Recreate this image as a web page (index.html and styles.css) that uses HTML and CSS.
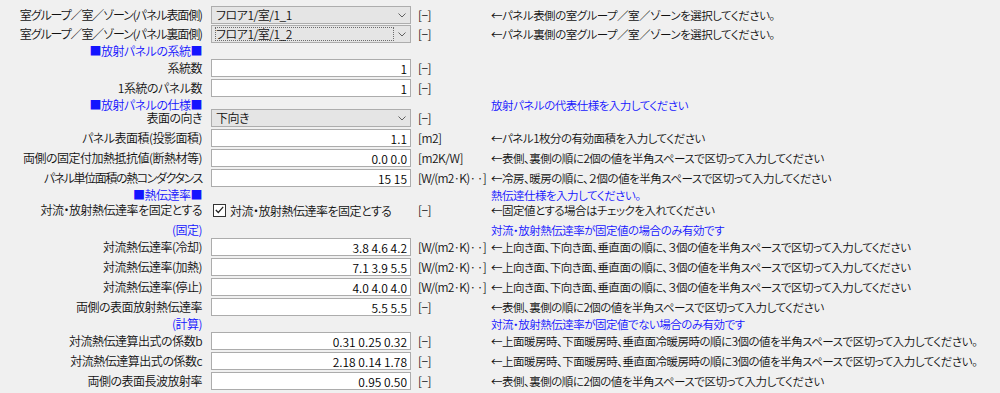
FILE: index.html
```html
<!DOCTYPE html>
<html lang="ja">
<head>
  <meta charset="UTF-8">
  <meta name="viewport" content="width=device-width, initial-scale=1.0">
  <title>放射パネル</title>
  <link rel="stylesheet" href="styles.css">
</head>
<body>
  <div class="form">
    <div class="row first">
      <span class="label narrow">室グループ／室／ゾーン(パネル表面側)</span>
      <div class="combo"><span class="combo-text">フロア1/室/1_1</span><svg class="chevron" width="8" height="5" viewBox="0 0 8 5"><path d="M0.5 0.5 L4 4 L7.5 0.5" fill="none" stroke="#606060"/></svg></div>
      <span class="unit">[−]</span>
      <span class="hint">←パネル表側の室グループ／室／ゾーンを選択してください。</span>
    </div>
    <div class="row">
      <span class="label narrow">室グループ／室／ゾーン(パネル裏面側)</span>
      <div class="combo focused"><span class="combo-text">フロア1/室/1_2</span><svg class="chevron" width="8" height="5" viewBox="0 0 8 5"><path d="M0.5 0.5 L4 4 L7.5 0.5" fill="none" stroke="#606060"/></svg></div>
      <span class="unit">[−]</span>
      <span class="hint">←パネル裏側の室グループ／室／ゾーンを選択してください。</span>
    </div>
    <div class="row head system">
      <span class="label">■放射パネルの系統■</span>
    </div>
    <div class="row">
      <span class="label">系統数</span>
      <input class="field" type="text" value="1">
      <span class="unit">[−]</span>
    </div>
    <div class="row">
      <span class="label">1系統のパネル数</span>
      <input class="field" type="text" value="1">
      <span class="unit">[−]</span>
    </div>
    <div class="row head tight">
      <span class="label">■放射パネルの仕様■</span>
      <span class="hint">放射パネルの代表仕様を入力してください</span>
    </div>
    <div class="row">
      <span class="label">表面の向き</span>
      <div class="combo"><span class="combo-text">下向き</span><svg class="chevron" width="8" height="5" viewBox="0 0 8 5"><path d="M0.5 0.5 L4 4 L7.5 0.5" fill="none" stroke="#606060"/></svg></div>
      <span class="unit">[−]</span>
    </div>
    <div class="row">
      <span class="label">パネル表面積(投影面積)</span>
      <input class="field" type="text" value="1.1">
      <span class="unit">[m2]</span>
      <span class="hint">←パネル1枚分の有効面積を入力してください</span>
    </div>
    <div class="row">
      <span class="label">両側の固定付加熱抵抗値(断熱材等)</span>
      <input class="field" type="text" value="0.0 0.0">
      <span class="unit">[m2K/W]</span>
      <span class="hint">←表側、裏側の順に2個の値を半角スペースで区切って入力してください</span>
    </div>
    <div class="row">
      <span class="label narrower">パネル単位面積の熱コンダクタンス</span>
      <input class="field" type="text" value="15 15">
      <span class="unit wide">[W/(m2·K)·&thinsp;·]</span>
      <span class="hint">←冷房、暖房の順に、２個の値を半角スペースで区切って入力してください</span>
    </div>
    <div class="row head short">
      <span class="label">■熱伝達率■</span>
      <span class="hint">熱伝達仕様を入力してください。</span>
    </div>
    <div class="row">
      <span class="label">対流・放射熱伝達率を固定とする</span>
      <label class="check"><span class="box"><svg width="9" height="8" viewBox="0 0 9 8"><path d="M0.8 4 L3.3 6.5 L8.2 0.8" fill="none" stroke="#222" stroke-width="1.2"/></svg></span>対流・放射熱伝達率を固定とする</label>
      <span class="unit">[−]</span>
      <span class="hint">←固定値とする場合はチェックを入れてください</span>
    </div>
    <div class="row head tall">
      <span class="label">(固定)</span>
      <span class="hint">対流・放射熱伝達率が固定値の場合のみ有効です</span>
    </div>
    <div class="row">
      <span class="label">対流熱伝達率(冷却)</span>
      <input class="field" type="text" value="3.8 4.6 4.2">
      <span class="unit wide">[W/(m2·K)·&thinsp;·]</span>
      <span class="hint">←上向き面、下向き面、垂直面の順に、３個の値を半角スペースで区切って入力してください</span>
    </div>
    <div class="row">
      <span class="label">対流熱伝達率(加熱)</span>
      <input class="field" type="text" value="7.1 3.9 5.5">
      <span class="unit wide">[W/(m2·K)·&thinsp;·]</span>
      <span class="hint">←上向き面、下向き面、垂直面の順に、３個の値を半角スペースで区切って入力してください</span>
    </div>
    <div class="row">
      <span class="label">対流熱伝達率(停止)</span>
      <input class="field" type="text" value="4.0 4.0 4.0">
      <span class="unit wide">[W/(m2·K)·&thinsp;·]</span>
      <span class="hint">←上向き面、下向き面、垂直面の順に、３個の値を半角スペースで区切って入力してください</span>
    </div>
    <div class="row">
      <span class="label">両側の表面放射熱伝達率</span>
      <input class="field" type="text" value="5.5 5.5">
      <span class="unit">[−]</span>
      <span class="hint">←表側、裏側の順に2個の値を半角スペースで区切って入力してください</span>
    </div>
    <div class="row head calc">
      <span class="label">(計算)</span>
      <span class="hint">対流・放射熱伝達率が固定値でない場合のみ有効です</span>
    </div>
    <div class="row">
      <span class="label">対流熱伝達算出式の係数b</span>
      <input class="field" type="text" value="0.31 0.25 0.32">
      <span class="unit">[−]</span>
      <span class="hint">←上面暖房時、下面暖房時、垂直面冷暖房時の順に3個の値を半角スペースで区切って入力してください。</span>
    </div>
    <div class="row">
      <span class="label">対流熱伝達算出式の係数c</span>
      <input class="field" type="text" value="2.18 0.14 1.78">
      <span class="unit">[−]</span>
      <span class="hint">←上面暖房時、下面暖房時、垂直面冷暖房時の順に3個の値を半角スペースで区切って入力してください。</span>
    </div>
    <div class="row">
      <span class="label">両側の表面長波放射率</span>
      <input class="field" type="text" value="0.95 0.50">
      <span class="unit">[−]</span>
      <span class="hint">←表側、裏側の順に2個の値を半角スペースで区切って入力してください</span>
    </div>
    <div class="row head">
      <span class="label">■放射パネルの制御■</span>
    </div>
  </div>
</body>
</html>
```

FILE: styles.css
```css
html, body {
  overflow: hidden;
}
body {
  margin: 0;
  padding-top: 6px;
  background: #f0f0f0;
  color: #111;
  font-family: "Noto Sans CJK JP", "Noto Sans", sans-serif;
  font-size: 12px;
  font-weight: 350;
  font-feature-settings: "palt";
  letter-spacing: -0.5px;
}
.row {
  display: grid;
  grid-template-columns: 211px 207px 73px auto;
  align-items: start;
  height: 20px;
  white-space: nowrap;
}
.row.first {
  height: 19px;
}
.label {
  grid-column: 1;
  text-align: right;
  padding-right: 9px;
  line-height: 18px;
}
/* katakana-heavy labels run wider than the original UI font */
.label.narrow {
  letter-spacing: -1.1px;
}
.label.narrower {
  letter-spacing: -1.4px;
}
.unit {
  grid-column: 3;
  line-height: 18px;
  letter-spacing: -0.5px;
}
.unit.wide {
  letter-spacing: -0.8px;
}
.hint {
  grid-column: 4;
  line-height: 18px;
  font-size: 11.5px;
}
.head {
  height: 14px;
  align-items: center;
}
.head.system {
  height: 12px;
  padding-bottom: 2px;
}
.head.tight {
  height: 7px;
  padding-bottom: 3px;
}
.head.short {
  height: 10px;
  padding-bottom: 2px;
}
.head.tall {
  height: 17px;
}
.head.calc {
  height: 10px;
  padding-bottom: 4px;
}
.head .label,
.head .hint {
  color: #1414ff;
  line-height: 12px;
}
.field {
  grid-column: 2;
  box-sizing: border-box;
  width: 200px;
  height: 18px;
  margin: 0;
  padding: 0 3px;
  border: 1px solid #acacac;
  background: #fff;
  font: inherit;
  letter-spacing: 0;
  text-align: right;
  outline: none;
}
.combo {
  grid-column: 2;
  box-sizing: border-box;
  width: 200px;
  height: 18px;
  display: flex;
  align-items: center;
  border: 1px solid #adadad;
  background: #e5e5e5;
  padding: 0 3px;
}
.combo-text {
  flex: 1;
  line-height: 14px;
  padding-left: 1px;
}
.combo.focused .combo-text {
  border: 1px dotted #6c6c6c;
  margin-right: 4px;
  padding-left: 0;
  line-height: 12px;
}
.chevron {
  margin-right: 1px;
}
.check {
  grid-column: 2;
  display: flex;
  align-items: center;
  height: 18px;
}
.check .box {
  box-sizing: border-box;
  width: 13px;
  height: 13px;
  margin: 0 4px 0 2px;
  border: 1px solid #333;
  background: #fff;
  display: flex;
  align-items: center;
  justify-content: center;
}
```
